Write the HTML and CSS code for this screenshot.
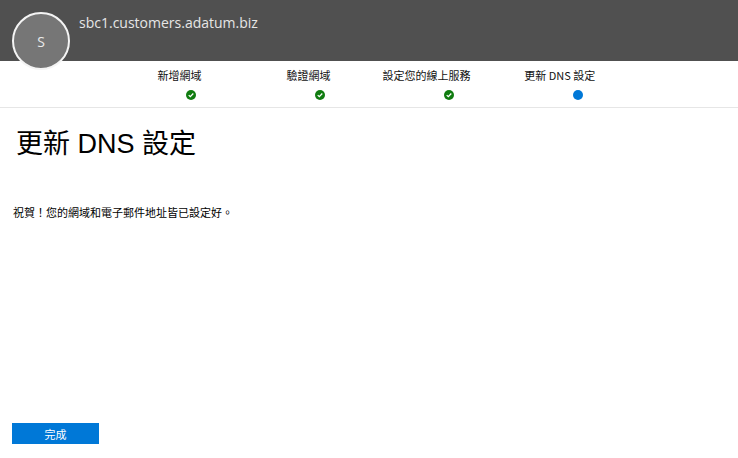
FILE: index.html
```html
<!DOCTYPE html>
<html lang="zh-Hant">
<head>
<meta charset="utf-8">
<title>更新 DNS 設定</title>
<link rel="stylesheet" href="styles.css">
</head>
<body>
<div class="page">
  <header class="topbar">
    <div class="avatar">S</div>
    <div class="domain">sbc1.customers.adatum.biz</div>
  </header>
  <nav class="steps">
    <div class="step">
      <span class="label">新增網域</span>
      <svg class="mark" viewBox="0 0 10 10" width="10" height="10"><circle cx="5" cy="5" r="5" fill="#107c10"/><path d="M2.7 5.1 L4.3 6.6 L7.3 3.5" fill="none" stroke="#fff" stroke-width="1.3"/></svg>
    </div>
    <div class="step">
      <span class="label">驗證網域</span>
      <svg class="mark" viewBox="0 0 10 10" width="10" height="10"><circle cx="5" cy="5" r="5" fill="#107c10"/><path d="M2.7 5.1 L4.3 6.6 L7.3 3.5" fill="none" stroke="#fff" stroke-width="1.3"/></svg>
    </div>
    <div class="step">
      <span class="label">設定您的線上服務</span>
      <svg class="mark" viewBox="0 0 10 10" width="10" height="10"><circle cx="5" cy="5" r="5" fill="#107c10"/><path d="M2.7 5.1 L4.3 6.6 L7.3 3.5" fill="none" stroke="#fff" stroke-width="1.3"/></svg>
    </div>
    <div class="step">
      <span class="label">更新 DNS 設定</span>
      <span class="dot"></span>
    </div>
  </nav>
  <main class="content">
    <h1 class="title">更新 DNS 設定</h1>
    <p class="message">祝賀！您的網域和電子郵件地址皆已設定好。</p>
  </main>
  <footer class="actions">
    <button class="done">完成</button>
  </footer>
</div>
</body>
</html>
```
FILE: styles.css
```css
html, body {
  margin: 0;
  padding: 0;
  background: #ffffff;
}
body {
  font-family: "Noto Sans CJK TC", "Noto Sans", sans-serif;
  color: #000;
}
.page {
  width: 738px;
  height: 458px;
  display: flex;
  flex-direction: column;
  overflow: hidden;
}
.topbar {
  height: 61px;
  background: #505050;
  display: flex;
  align-items: flex-start;
  position: relative;
  flex-shrink: 0;
}
.avatar {
  width: 54px;
  height: 54px;
  border: 2px solid #f4f4f4;
  border-radius: 50%;
  background: #767676;
  color: #eaeaea;
  font-family: "Open Sans", "Noto Sans", sans-serif;
  font-size: 14px;
  display: flex;
  align-items: center;
  justify-content: center;
  margin: 12px 0 0 12px;
  position: relative;
  z-index: 1;
  flex-shrink: 0;
}
.domain {
  margin: 13px 0 0 9px;
  font-family: "Open Sans", "Noto Sans", sans-serif;
  font-size: 14px;
  color: #e6e6e6;
  line-height: 20px;
}
.steps {
  height: 46px;
  border-bottom: 1px solid #e6e6e6;
  display: grid;
  grid-template-columns: repeat(4, 129px);
  padding-left: 126px;
  flex-shrink: 0;
}
.step {
  display: flex;
  flex-direction: column;
  align-items: center;
}
.label {
  font-size: 11px;
  line-height: 16px;
  margin-top: 6px;
  white-space: nowrap;
  transform: translateX(-25%);
  color: #111;
}
.mark {
  display: block;
  margin-top: 7px;
}
.dot {
  display: block;
  width: 10px;
  height: 10px;
  border-radius: 50%;
  background: #0078d7;
  margin-top: 7px;
}
.content {
  flex: 1;
  padding: 0 16px;
}
.title {
  margin: 16px 0 0 0;
  font-size: 27px;
  font-weight: normal;
  line-height: 40px;
  font-family: "Liberation Sans", "Noto Sans CJK TC", sans-serif;
}
.message {
  margin: 40px 0 0 -3px;
  font-size: 11px;
  line-height: 16px;
}
.actions {
  padding: 0 0 14px 12px;
  flex-shrink: 0;
}
.done {
  width: 87px;
  height: 21px;
  border: none;
  background: #0078d7;
  color: #fff;
  font-family: "Noto Sans CJK TC", sans-serif;
  font-size: 11px;
  padding: 0;
  display: block;
}
```
